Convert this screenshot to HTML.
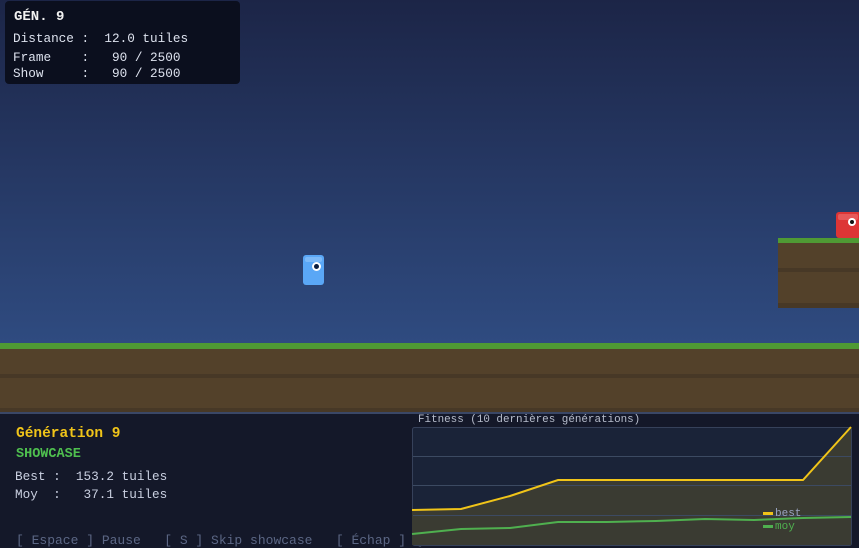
<!DOCTYPE html>
<html><head><meta charset="utf-8"><style>
*{margin:0;padding:0;box-sizing:border-box}
body{width:859px;height:548px;overflow:hidden;position:relative;font-family:"Liberation Mono","DejaVu Sans Mono",monospace;background:#141829}
.sky{position:absolute;left:0;top:0;width:859px;height:343px;background:linear-gradient(#1c2547,#2f4b80)}
.abs{position:absolute}
.t{position:absolute;white-space:pre;font-size:12.7px;color:#dde2ee}
</style></head><body>
<div class="sky"></div>
<div class="abs" style="left:0;top:343px;width:859px;height:6px;background:#4f9a34"></div>
<div class="abs" style="left:0;top:349px;width:859px;height:64px;background:#53412a"></div>
<div class="abs" style="left:0;top:374px;width:859px;height:4px;background:#473826"></div>
<div class="abs" style="left:0;top:408px;width:859px;height:4px;background:#473826"></div>
<div class="abs" style="left:0;top:412px;width:859px;height:2px;background:#3a4766"></div>
<div class="abs" style="left:778px;top:238px;width:81px;height:5px;background:#4f9a34"></div>
<div class="abs" style="left:778px;top:243px;width:81px;height:65px;background:#53412a"></div>
<div class="abs" style="left:778px;top:268px;width:81px;height:4px;background:#473826"></div>
<div class="abs" style="left:778px;top:303px;width:81px;height:5px;background:#473826"></div>
<div class="abs" style="left:836px;top:212px;width:25px;height:26px;background:#dd3535;border-radius:3px"></div>
<div class="abs" style="left:838px;top:214px;width:20px;height:6px;background:#e75959;border-radius:2px"></div>
<div class="abs" style="left:848px;top:218px;width:8px;height:8px;background:#fff;border-radius:50%"></div>
<div class="abs" style="left:850px;top:220px;width:4px;height:4px;background:#111;border-radius:50%"></div>
<div class="abs" style="left:303px;top:255px;width:21px;height:30px;background:#5aa7f6;border-radius:3px"></div>
<div class="abs" style="left:305px;top:257px;width:17px;height:5px;background:#7dbaf8;border-radius:2px"></div>
<div class="abs" style="left:312px;top:262px;width:9px;height:9px;background:#fff;border-radius:50%"></div>
<div class="abs" style="left:314px;top:264px;width:5px;height:5px;background:#0b1e40;border-radius:50%"></div>
<div class="abs" style="left:5px;top:1px;width:235px;height:83px;background:#0b0f1e;border-radius:4px"></div>
<div class="t" style="left:14px;top:9px;font-weight:bold;font-size:14px;color:#f2f2f2">GÉN. 9</div>
<div class="t" style="left:13px;top:31px">Distance :  12.0 tuiles</div>
<div class="t" style="left:13px;top:50px">Frame    :   90 / 2500</div>
<div class="t" style="left:13px;top:66px">Show     :   90 / 2500</div>
<div class="t" style="left:16px;top:426px;font-weight:bold;font-size:14.5px;color:#f0c419">Génération 9</div>
<div class="t" style="left:16px;top:447px;font-weight:bold;font-size:13.5px;color:#4fc04f">SHOWCASE</div>
<div class="t" style="left:15px;top:469px;color:#c9cfe0">Best :  153.2 tuiles</div>
<div class="t" style="left:15px;top:487px;color:#c9cfe0">Moy  :   37.1 tuiles</div>
<div class="t" style="left:16px;top:533px;font-size:13px;color:#5c6785">[ Espace ] Pause   [ S ] Skip showcase   [ Échap ] Q</div>
<div class="t" style="left:418px;top:414px;font-size:10.9px;color:#b7bdcc">Fitness (10 dernières générations)</div>
<svg class="abs" style="left:0;top:0" width="859" height="548">
<rect x="412.5" y="427.5" width="439" height="118" rx="2" fill="#1a2338" stroke="#36415a"/>
<polygon points="412,510 461,509 510,496 558,480 607,480 656,480 705,480 754,480 803,480 851,427 851,545 412,545" fill="#3a3b32"/>
<g stroke="#3c4a62" stroke-width="1"><line x1="413" y1="456.5" x2="851" y2="456.5"/><line x1="413" y1="485.5" x2="851" y2="485.5"/><line x1="413" y1="515.5" x2="851" y2="515.5"/></g>
<polyline points="412,510 461,509 510,496 558,480 607,480 656,480 705,480 754,480 803,480 851,427" fill="none" stroke="#f0c419" stroke-width="2"/>
<polyline points="412,534 461,529 510,528 558,522 607,522 656,521 705,519 754,520 803,518 851,517" fill="none" stroke="#4fb04f" stroke-width="2"/>
<rect x="763" y="512" width="10" height="3" fill="#f0c419"/>
<rect x="763" y="525" width="10" height="3" fill="#4fb04f"/>
<text x="775" y="516" font-family="Liberation Mono, monospace" font-size="11" fill="#9aa3c0">best</text>
<text x="775" y="529" font-family="Liberation Mono, monospace" font-size="11" fill="#4fb04f">moy</text>
</svg>
</body></html>
